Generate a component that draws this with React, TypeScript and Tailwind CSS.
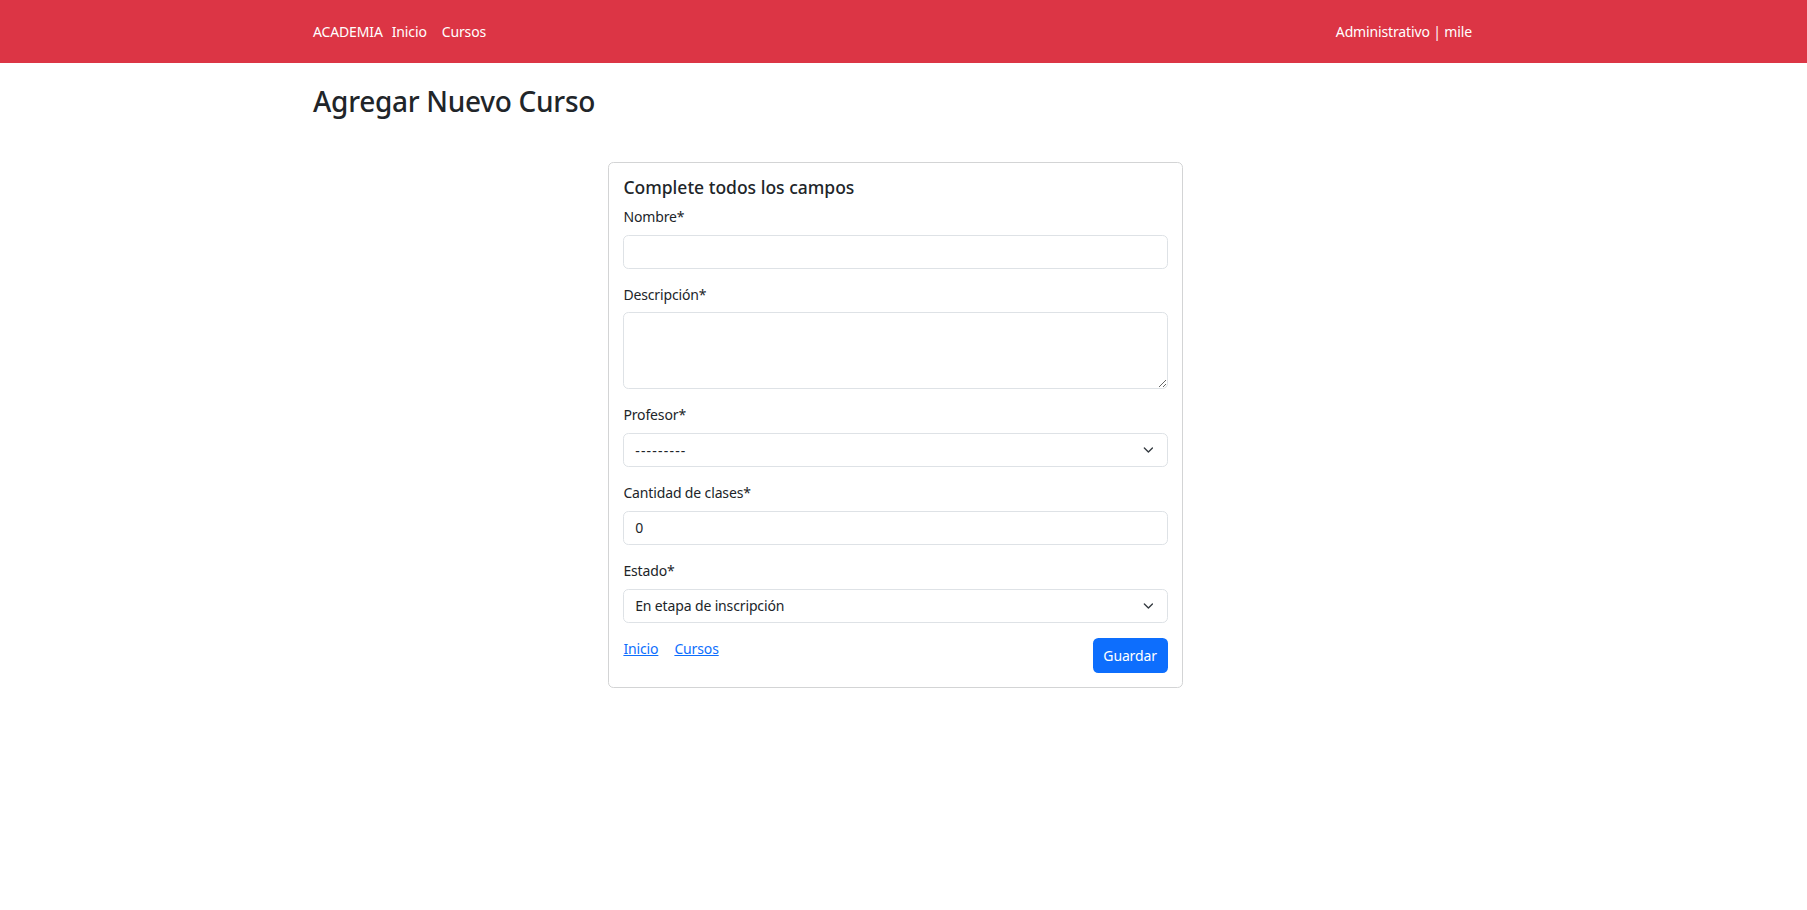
import React from 'react';

const font = { fontFamily: '"Noto Sans", "Liberation Sans", sans-serif' };

const Chevron = () => (
  <svg
    width="10.8"
    height="10.8"
    viewBox="0 0 16 16"
    fill="none"
    stroke="#343a40"
    strokeWidth="2"
    strokeLinecap="round"
    strokeLinejoin="round"
    className="pointer-events-none absolute right-[13.6px] top-1/2 -translate-y-1/2"
  >
    <path d="m2 5 6 6 6-6" />
  </svg>
);

const Label = ({ children }: { children: React.ReactNode }) => (
  <label className="mb-[7.2px] block text-[14px] leading-[21.6px] tracking-[-0.01em] text-[#212529]">
    {children}
  </label>
);

const inputCls =
  'block w-full rounded-[5.4px] border border-[#dee2e6] bg-white px-[10.8px] text-[14px] tracking-[-0.01em] text-[#212529] outline-none';

const SelectField = ({ value, extra = '' }: { value: string; extra?: string }) => (
  <div className="relative">
    <select className={`${inputCls} h-[34px] appearance-none pr-[36px] ${extra}`} defaultValue={value}>
      <option>{value}</option>
    </select>
    <Chevron />
  </div>
);

const App = () => {
  return (
    <div className="min-h-screen bg-white text-[#212529]" style={font}>
      <nav className="h-[63px] bg-[#dc3545] text-white">
        <div className="mx-auto flex h-full w-[1159px] -translate-x-[11px] items-center justify-between text-[14px] tracking-[-0.01em]">
          <div className="flex items-center">
            <span>ACADEMIA</span>
            <span className="ml-[9px]">Inicio</span>
            <span className="ml-[15px]">Cursos</span>
          </div>
          <span>Administrativo | mile</span>
        </div>
      </nav>

      <div className="mx-auto w-[1159px] -translate-x-[11px]">
        <h2 className="mt-[21px] text-[28px] font-medium leading-[34.56px] tracking-[-0.01em] text-[#212529]">
          Agregar Nuevo Curso
        </h2>
      </div>

      <div className="mx-auto mt-[43px] w-[575px] -translate-x-[8px] rounded-[5.4px] border border-[#d3d4d5] px-[14.4px] pt-[14.4px] pb-[14px]">
        <h5 className="mb-[7.2px] text-[17.5px] font-medium leading-[21.6px]">Complete todos los campos</h5>
        <form>
          <div className="mb-[15px]">
            <Label>Nombre*</Label>
            <input type="text" className={`${inputCls} h-[34px]`} />
          </div>
          <div className="mb-[15px]">
            <Label>Descripción*</Label>
            <textarea className={`${inputCls} h-[77px] py-[5px]`} />
          </div>
          <div className="mb-[15px]">
            <Label>Profesor*</Label>
            <SelectField value="---------" extra="tracking-[1.2px]" />
          </div>
          <div className="mb-[15px]">
            <Label>Cantidad de clases*</Label>
            <input type="number" defaultValue={0} className={`${inputCls} h-[34px]`} />
          </div>
          <div className="mb-[15px]">
            <Label>Estado*</Label>
            <SelectField value="En etapa de inscripción" />
          </div>
          <div className="flex items-start justify-between">
            <div className="flex gap-[16px] text-[14px] leading-[21.6px] tracking-[-0.01em]">
              <a href="#" className="text-[#0d6efd] underline">Inicio</a>
              <a href="#" className="text-[#0d6efd] underline">Cursos</a>
            </div>
            <button
              type="button"
              className="h-[35px] rounded-[5.4px] bg-[#0d6efd] px-[10.8px] text-[14px] tracking-[-0.01em] text-white"
            >
              Guardar
            </button>
          </div>
        </form>
      </div>
    </div>
  );
};

export default App;
